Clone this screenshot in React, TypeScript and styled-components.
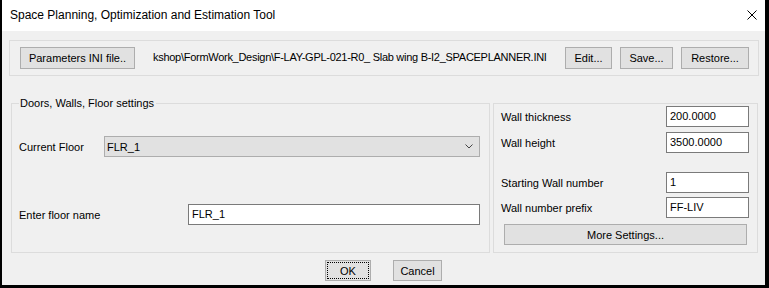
import React from "react";
import styled, { createGlobalStyle } from "styled-components";

const Global = createGlobalStyle`
  html, body { margin: 0; padding: 0; background: #000; }
  * { box-sizing: border-box; }
  body { font-family: "Liberation Sans", Arial, sans-serif; font-size: 11px; color: #000; }
`;

const Desktop = styled.div`
  width: 769px;
  height: 288px;
  background: #000;
  padding: 0 4px 3px 2px;
`;

const Window = styled.div`
  height: 100%;
  display: flex;
  flex-direction: column;
  background: #f0f0f0;
`;

const TitleBar = styled.div`
  height: 31px;
  flex: none;
  background: #fff;
  display: flex;
  align-items: center;
  justify-content: space-between;
  padding: 0 8px 0 8px;
`;

const Title = styled.span`
  font-size: 12px;
  line-height: 16px;
  padding-bottom: 1px;
`;

const CloseIcon = styled.svg`
  width: 10px;
  height: 10px;
  margin-bottom: 1px;
`;

const Body = styled.div`
  flex: 1;
  display: flex;
  flex-direction: column;
  padding-top: 9px;
`;

const FileBar = styled.div`
  height: 36px;
  margin: 0 6px 0 7px;
  border: 1px solid #dcdcdc;
  display: flex;
  align-items: center;
  padding: 0 9px 0 10px;
`;

const Btn = styled.button<{ $w: number; $focus?: boolean }>`
  width: ${(p) => p.$w}px;
  height: ${(p) => (p.$focus !== undefined ? 21 : 22)}px;
  flex: none;
  background: #e1e1e1;
  border: 1px solid #adadad;
  font-family: "Liberation Sans", Arial, sans-serif;
  font-size: 11px;
  color: #000;
  padding: 0;
  margin: 0;
  outline: ${(p) => (p.$focus ? "1px dotted #000" : "none")};
  outline-offset: -3px;
`;

const PathText = styled.span`
  flex: 1;
  margin-left: 18px;
  white-space: nowrap;
  overflow: hidden;
  letter-spacing: -0.28px;
  padding-bottom: 2px;
`;

const BtnGroup = styled.div`
  display: flex;
  gap: 8px;
`;

const Panels = styled.div`
  display: flex;
  gap: 3px;
  margin: 27px 7px 0 9px;
  height: 150px;
`;

const Group = styled.div<{ $w?: number }>`
  border: 1px solid #dcdcdc;
  display: flex;
  flex-direction: column;
  ${(p) => (p.$w ? `width: ${p.$w}px; flex: none;` : "flex: 1;")}
`;

const FloorGroup = styled(Group)`
  padding: 0 9px 0 7px;
`;

const WallGroup = styled(Group)`
  padding: 2px 8px 7px 7px;
`;

const Legend = styled.span`
  align-self: flex-start;
  margin: -7px 0 0 0;
  padding: 0 2px 0 1px;
  line-height: 13px;
  background: #f0f0f0;
`;

const Row = styled.div<{ $mt: number }>`
  display: flex;
  align-items: center;
  margin-top: ${(p) => p.$mt}px;
`;

const Label = styled.span<{ $w?: number }>`
  ${(p) => (p.$w ? `width: ${p.$w}px; flex: none;` : "flex: 1;")}
  white-space: nowrap;
`;

const Combo = styled.div`
  flex: 1;
  height: 21px;
  background: #e1e1e1;
  border: 1px solid #adadad;
  display: flex;
  align-items: center;
  justify-content: space-between;
  padding: 0 6px 0 2px;
`;

const TextInput = styled.div<{ $w?: number }>`
  ${(p) => (p.$w ? `width: ${p.$w}px; flex: none;` : "flex: 1;")}
  height: 21px;
  background: #fff;
  border: 1px solid #7a7a7a;
  display: flex;
  align-items: center;
  padding: 0 2px 1px 3px;
`;

const WideBtn = styled.button`
  height: 21px;
  margin: 6px 2px 0 3px;
  background: #e1e1e1;
  border: 1px solid #adadad;
  font-family: "Liberation Sans", Arial, sans-serif;
  font-size: 11px;
  color: #000;
  padding: 0;
`;

const Footer = styled.div`
  display: flex;
  justify-content: center;
  gap: 22px;
  margin-top: 7px;
`;

const Chevron = () => (
  <svg width="8" height="5" viewBox="0 0 8 5">
    <polyline points="0.5,0.5 4,4 7.5,0.5" fill="none" stroke="#444" strokeWidth="1" />
  </svg>
);

const wallRows = [
  { label: "Wall thickness", value: "200.0000", mt: 0 },
  { label: "Wall height", value: "3500.0000", mt: 5 },
  { label: "Starting Wall number", value: "1", mt: 19 },
  { label: "Wall number prefix", value: "FF-LIV", mt: 4 },
];

export default function App() {
  return (
    <>
      <Global />
      <Desktop>
        <Window>
          <TitleBar>
            <Title>Space Planning, Optimization and Estimation Tool</Title>
            <CloseIcon viewBox="0 0 10 10">
              <path d="M0.5 0.5 L9.5 9.5 M9.5 0.5 L0.5 9.5" stroke="#000" strokeWidth="1" />
            </CloseIcon>
          </TitleBar>
          <Body>
            <FileBar>
              <Btn $w={115}>Parameters INI file..</Btn>
              <PathText>kshop\FormWork_Design\F-LAY-GPL-021-R0_ Slab wing B-I2_SPACEPLANNER.INI</PathText>
              <BtnGroup>
                <Btn $w={47}>Edit...</Btn>
                <Btn $w={53}>Save...</Btn>
                <Btn $w={68}>Restore...</Btn>
              </BtnGroup>
            </FileBar>
            <Panels>
              <FloorGroup $w={479}>
                <Legend>Doors, Walls, Floor settings</Legend>
                <Row $mt={26}>
                  <Label $w={85}>Current Floor</Label>
                  <Combo>
                    <span>FLR_1</span>
                    <Chevron />
                  </Combo>
                </Row>
                <Row $mt={47}>
                  <Label $w={169}>Enter floor name</Label>
                  <TextInput>FLR_1</TextInput>
                </Row>
              </FloorGroup>
              <WallGroup>
                {wallRows.map((r) => (
                  <Row key={r.label} $mt={r.mt}>
                    <Label>{r.label}</Label>
                    <TextInput $w={83}>{r.value}</TextInput>
                  </Row>
                ))}
                <WideBtn>More Settings...</WideBtn>
              </WallGroup>
            </Panels>
            <Footer>
              <Btn $w={46} $focus>OK</Btn>
              <Btn $w={49} $focus={false}>Cancel</Btn>
            </Footer>
          </Body>
        </Window>
      </Desktop>
    </>
  );
}
